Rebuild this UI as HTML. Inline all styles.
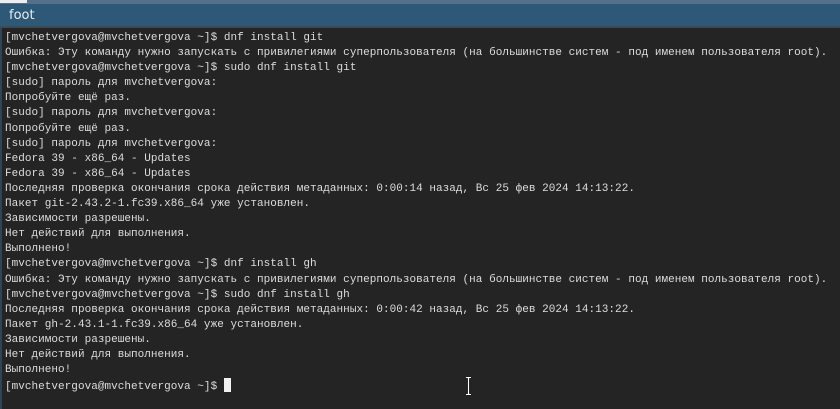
<!DOCTYPE html>
<html><head><meta charset="utf-8"><style>
html,body{margin:0;padding:0;width:840px;height:409px;overflow:hidden;background:#242424}
#top{position:absolute;left:0;top:0;width:840px;height:4px;background:#55708a}
#tab{position:absolute;left:0;top:0;width:27px;height:3px;background:#e8eef4}
#title{position:absolute;left:0;top:4px;width:840px;height:24px;background:#2d5877;border-bottom:2px solid #3c4a56;box-sizing:border-box}
#title span{position:absolute;left:9px;top:4px;font:13px "DejaVu Sans","Liberation Sans",sans-serif;color:#e6eef5}
#lb{position:absolute;left:0;top:28px;width:2px;height:381px;background:#2f4556}
#term{position:absolute;left:5px;top:31px;margin:0;font:11px/15.1px "Liberation Mono","DejaVu Sans Mono",monospace;color:#dcdcdc;white-space:pre;letter-spacing:0.03px}
.cur{display:inline-block;width:7px;height:14px;background:#f2f2f2;vertical-align:-3px}
#ib{position:absolute;left:465px;top:376px;width:7px;height:20px}
</style></head><body>
<div id="top"></div><div id="tab"></div>
<div id="title"><span>foot</span></div>
<div id="lb"></div>
<pre id="term">[mvchetvergova@mvchetvergova ~]$ dnf install git
Ошибка: Эту команду нужно запускать с привилегиями суперпользователя (на большинстве систем - под именем пользователя root).
[mvchetvergova@mvchetvergova ~]$ sudo dnf install git
[sudo] пароль для mvchetvergova:
Попробуйте ещё раз.
[sudo] пароль для mvchetvergova:
Попробуйте ещё раз.
[sudo] пароль для mvchetvergova:
Fedora 39 - x86_64 - Updates
Fedora 39 - x86_64 - Updates
Последняя проверка окончания срока действия метаданных: 0:00:14 назад, Вс 25 фев 2024 14:13:22.
Пакет git-2.43.2-1.fc39.x86_64 уже установлен.
Зависимости разрешены.
Нет действий для выполнения.
Выполнено!
[mvchetvergova@mvchetvergova ~]$ dnf install gh
Ошибка: Эту команду нужно запускать с привилегиями суперпользователя (на большинстве систем - под именем пользователя root).
[mvchetvergova@mvchetvergova ~]$ sudo dnf install gh
Последняя проверка окончания срока действия метаданных: 0:00:42 назад, Вс 25 фев 2024 14:13:22.
Пакет gh-2.43.1-1.fc39.x86_64 уже установлен.
Зависимости разрешены.
Нет действий для выполнения.
Выполнено!
[mvchetvergova@mvchetvergova ~]$ <span class="cur"></span></pre>
<svg id="ib" viewBox="0 0 7 20"><path d="M1 1.5h5M3.5 1.5v17M1 18.5h5" stroke="#000" stroke-width="3" fill="none"/><path d="M1 1.5h5M3.5 1.5v17M1 18.5h5" stroke="#fff" stroke-width="1.3" fill="none"/></svg>
</body></html>
